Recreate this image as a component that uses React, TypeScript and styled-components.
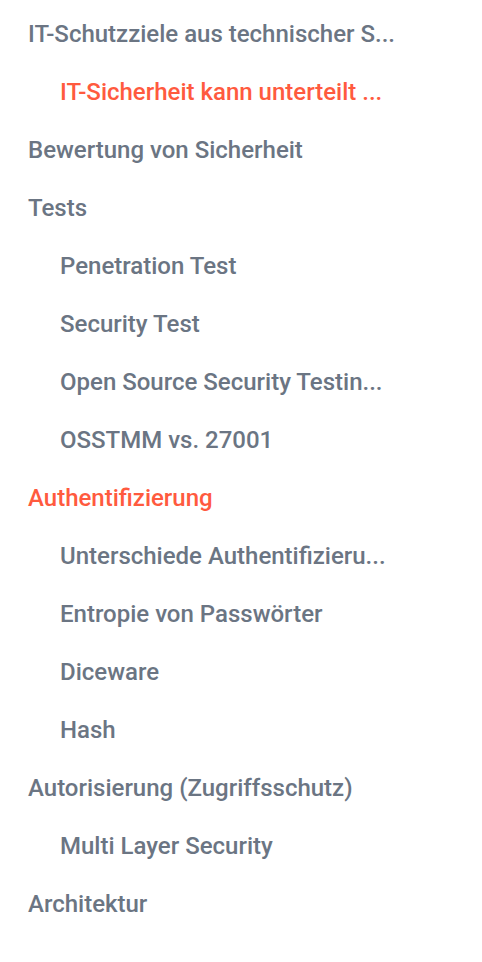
import React from 'react';
import styled, {createGlobalStyle} from 'styled-components';

const GlobalStyle = createGlobalStyle`
  html, body {
    margin: 0;
    padding: 0;
    background: #ffffff;
  }
  body {
    font-family: Roboto, "Liberation Sans", Arial, sans-serif;
  }
`;

const TocList = styled.ul`
  list-style: none;
  margin: 0;
  padding: 5px 0 0 28px;
  display: flex;
  flex-direction: column;
`;

const TocItem = styled.li<{level: number; active?: boolean}>`
  height: 58px;
  display: flex;
  align-items: center;
  padding-left: ${props => props.level * 32}px;
  font-size: 24px;
  font-weight: 500;
  white-space: nowrap;
  color: ${props => (props.active ? '#ff5a3e' : '#6b7583')};
  cursor: pointer;
`;

type Entry = {title: string; level: number; active?: boolean};

const entries: Entry[] = [
  {title: 'IT-Schutzziele aus technischer S...', level: 0},
  {title: 'IT-Sicherheit kann unterteilt ...', level: 1, active: true},
  {title: 'Bewertung von Sicherheit', level: 0},
  {title: 'Tests', level: 0},
  {title: 'Penetration Test', level: 1},
  {title: 'Security Test', level: 1},
  {title: 'Open Source Security Testin...', level: 1},
  {title: 'OSSTMM vs. 27001', level: 1},
  {title: 'Authentifizierung', level: 0, active: true},
  {title: 'Unterschiede Authentifizieru...', level: 1},
  {title: 'Entropie von Passwörter', level: 1},
  {title: 'Diceware', level: 1},
  {title: 'Hash', level: 1},
  {title: 'Autorisierung (Zugriffsschutz)', level: 0},
  {title: 'Multi Layer Security', level: 1},
  {title: 'Architektur', level: 0}
];

const App: React.FC = () => (
  <>
    <GlobalStyle />
    <TocList>
      {entries.map(entry => (
        <TocItem key={entry.title} level={entry.level} active={entry.active}>
          {entry.title}
        </TocItem>
      ))}
    </TocList>
  </>
);

export default App;
